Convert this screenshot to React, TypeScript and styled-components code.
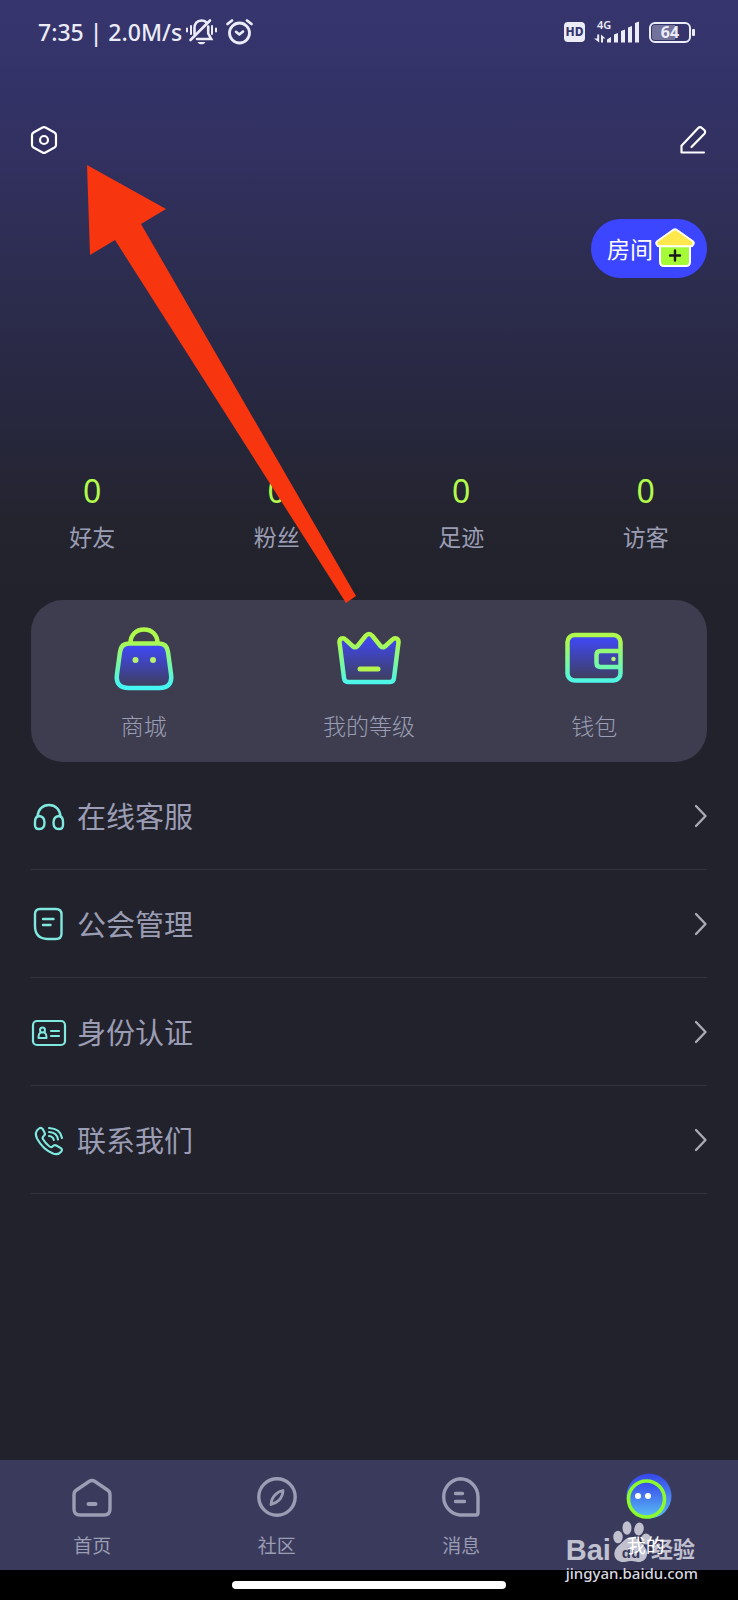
import React from 'react';
import styled, { createGlobalStyle } from 'styled-components';

const color = {
  page: '#22222c',
  card: '#3d3d4f',
  bar: '#3a3a5c',
  muted: '#9a9db3',
  lime: '#b2fa4b',
  aqua: '#7fe9e0',
  room: '#3c46ff',
  status: '#ececf8',
};

const GlobalStyle = createGlobalStyle`
  *, *::before, *::after { box-sizing: border-box; }
  body {
    margin: 0;
    background: ${color.page};
    font-family: "Noto Sans", "Noto Sans CJK SC", sans-serif;
    color: ${color.muted};
  }
  button {
    border: 0;
    padding: 0;
    background: none;
    color: inherit;
    font: inherit;
    cursor: pointer;
  }
  a { color: inherit; text-decoration: none; }
  svg { display: block; overflow: visible; flex: none; }
`;

const Page = styled.div`
  position: relative;
  display: flex;
  flex-direction: column;
  min-height: 100vh;
  background: linear-gradient(#36356d 0, #34336a 60px, #31305e 170px, #2c2c4e 290px, #27273f 410px, #24242f 520px, ${color.page} 590px);
`;

const StatusBar = styled.header`
  display: flex;
  align-items: center;
  justify-content: space-between;
  height: 64px;
  padding: 0 43px 0 38px;
  color: ${color.status};
`;

const StatusGroup = styled.div<{ $gap: number }>`
  display: flex;
  align-items: center;
  gap: ${({ $gap }) => $gap}px;
`;

const Clock = styled.span`
  font-size: 23px;
  font-weight: 500;
  line-height: 32px;
  white-space: nowrap;
`;

const HdBadge = styled.span`
  width: 21px;
  height: 20px;
  border-radius: 4px;
  background: ${color.status};
  color: #36356d;
  font-size: 12px;
  font-weight: 800;
  line-height: 20px;
  text-align: center;
`;

const Battery = styled.span`
  position: relative;
  width: 42px;
  height: 21px;
  margin-right: 4px;
  border: 2px solid ${color.status};
  border-radius: 6px;
  background: linear-gradient(90deg, #73729b 64%, transparent 64%) content-box;
  padding: 1px;
  font-size: 16px;
  font-weight: 700;
  line-height: 15px;
  text-align: center;

  &::after {
    content: '';
    position: absolute;
    top: 5px;
    right: -6px;
    width: 3px;
    height: 7px;
    border-radius: 1px;
    background: ${color.status};
  }
`;

const Toolbar = styled.nav`
  display: flex;
  justify-content: space-between;
  margin-top: 62px;
  padding: 0 31px;
  color: #fff;
`;

const RoomRow = styled.div`
  display: flex;
  justify-content: flex-end;
  margin-top: 65px;
  padding: 0 31px;
`;

const RoomButton = styled.button`
  display: flex;
  align-items: center;
  gap: 2px;
  height: 59px;
  padding: 0 12px 0 16px;
  border-radius: 30px;
  background: ${color.room};
  color: #fff;
  font-size: 23px;
  line-height: 32px;
`;

const Stats = styled.section`
  display: grid;
  grid-template-columns: repeat(4, 1fr);
  margin-top: 193px;
`;

const Stat = styled.button`
  display: flex;
  flex-direction: column;
  align-items: center;
  gap: 10px;
`;

const StatValue = styled.span`
  color: ${color.lime};
  font-size: 32px;
  line-height: 40px;
`;

const Label = styled.span<{ $light?: boolean }>`
  font-size: 23px;
  font-weight: ${({ $light }) => ($light ? 300 : 400)};
  line-height: 32px;
`;

const Card = styled.section`
  display: grid;
  grid-template-columns: repeat(3, 1fr);
  margin: 47px 31px 0;
  padding: 27px 0 20px;
  border-radius: 32px;
  background: ${color.card};
`;

const Feature = styled.button`
  display: flex;
  flex-direction: column;
  align-items: center;
  gap: 19px;
`;

const Menu = styled.nav`
  padding: 0 31px;
`;

const MenuRow = styled.a`
  display: flex;
  align-items: center;
  gap: 10px;
  height: 108px;
  border-bottom: 1px solid #33333d;
  font-size: 29px;
  line-height: 40px;
`;

const MenuText = styled.span`
  flex: 1;
  padding-top: 2px;
`;

const Footer = styled.footer`
  position: relative;
  margin-top: auto;
`;

const TabBar = styled.nav`
  display: grid;
  grid-template-columns: repeat(4, 1fr);
  height: 110px;
  background: ${color.bar};
`;

const Tab = styled.a<{ $active?: boolean }>`
  display: flex;
  flex-direction: column;
  align-items: center;
  gap: 13px;
  padding-top: 17px;
  color: ${({ $active }) => ($active ? '#fff' : color.muted)};
  font-size: 19px;
  line-height: 32px;
`;

const TabLabel = styled.span`
  position: relative;
  z-index: 1;
`;

const GestureArea = styled.div`
  display: flex;
  justify-content: center;
  height: 30px;
  padding-top: 11px;
  background: #000;
`;

const GesturePill = styled.span`
  width: 37%;
  height: 8px;
  border-radius: 4px;
  background: #fff;
`;

const Watermark = styled.div`
  position: absolute;
  right: 40px;
  bottom: 17px;
  color: #d8d8e2;
  pointer-events: none;
`;

const WatermarkBrand = styled.div`
  display: flex;
  align-items: flex-end;
  gap: 2px;
  height: 26px;
  opacity: 0.85;
  font-family: "Liberation Sans", "Noto Sans CJK SC", sans-serif;
  font-size: 29px;
  font-weight: 700;
  line-height: 26px;
`;

const WatermarkCjk = styled.span`
  font-size: 22px;
`;

const WatermarkUrl = styled.div`
  font-size: 15px;
  font-weight: 500;
  line-height: 20px;
`;

const Pointer = styled.svg`
  position: absolute;
  top: 165px;
  left: 87px;
  pointer-events: none;
`;

const MutedBell = () => (
  <svg width="36" height="26" viewBox="0 0 36 26" fill="none" stroke="currentColor" strokeWidth="2" strokeLinecap="round">
    <path d="M1 9.500v3M5 7v8M26 7v8M30 9.500v3" strokeWidth="2" />
    <path d="M8.500 15V9.500C8.500 4.500 11 1.500 15.500 1.500c2 0 3.600.6 4.800 1.700M22.200 7.500v7l3 5.500H11" strokeWidth="2.600" />
    <path d="M4.500 21 24 1.500" strokeWidth="2.600" />
    <path d="M11.500 23h8c-.8 1.500-2.200 2.300-4 2.300s-3.200-.8-4-2.300z" fill="currentColor" stroke="none" />
  </svg>
);

const Alarm = () => (
  <svg width="27" height="26" viewBox="0 0 27 26" fill="none" stroke="currentColor" strokeWidth="2.800" strokeLinecap="round" strokeLinejoin="round">
    <circle cx="13.500" cy="14" r="10" />
    <path d="M10 12.800 13.300 15.500l3.700-3" strokeWidth="2.600" />
    <path d="M1.500 5 6 1.500M25.500 5 21 1.500" strokeWidth="2.800" />
  </svg>
);

const Signal = () => (
  <svg width="46" height="22" viewBox="0 0 46 22" fill="currentColor">
    <text x="3" y="8" fontSize="11" fontWeight="600">4G</text>
    <path d="M3.200 13.500h2v8L0 17.500h3.200zM7 21.500H9V17.500H11.500L7 13.500z" />
    <path d="M13 21.500v-3l4-2.500v5.500zM20 21.500v-8l4-1.500v9.500zM27 21.500V10l4-1.500v13zM34 21.500V6.500L38 5v16.500zM41 21.500V2l4-1.500v21z" />
  </svg>
);

const SettingsIcon = () => (
  <svg width="26" height="28" viewBox="0 0 26 28" fill="none" stroke="currentColor" strokeWidth="2.200" strokeLinejoin="round">
    <path d="M11.500 1.500q1.500-.8 3 0l9 5q1.500.9 1.500 2.500v10q0 1.600-1.500 2.500l-9 5q-1.500.8-3 0l-9-5Q1 20.600 1 19V9q0-1.600 1.500-2.500z" />
    <circle cx="13" cy="14" r="4" />
  </svg>
);

const EditIcon = () => (
  <svg width="27" height="28" viewBox="0 0 27 28" fill="none" stroke="currentColor" strokeWidth="2.200" strokeLinecap="round" strokeLinejoin="round">
    <path d="M24 26.500H1.500v-6.800L18 2.200q2-2 4.200 0l1.800 1.600q2.200 2 .2 4.200L11.500 21" />
  </svg>
);

const HouseIcon = () => (
  <svg width="40" height="40" viewBox="0 0 40 40" strokeLinejoin="round" strokeLinecap="round">
    <path d="M5 16h30v17q0 4-4 4H9q-4 0-4-4z" fill="#a5fb36" stroke="#fff" strokeWidth="2" />
    <path d="M18 1q2-1.300 4 0l15.500 11q1.800 1.400 1 3.200-.7 2-2.800 2H4.300q-2.100 0-2.800-2-.8-1.800 1-3.200z" fill="#ffe84b" stroke="#fff" strokeWidth="2" />
    <path d="M20 21.500v10M15 26.500h10" stroke="#1a1a1a" strokeWidth="2.400" />
  </svg>
);

const Gradients = ({ id }: { id: string }) => (
  <defs>
    <linearGradient id={`${id}-line`} gradientUnits="userSpaceOnUse" x1="0" y1="8" x2="0" y2="58">
      <stop offset="0.100" stopColor="#aef94b" />
      <stop offset="1" stopColor="#46f6f2" />
    </linearGradient>
    <linearGradient id={`${id}-fill`} x1="0" y1="0" x2="0" y2="1">
      <stop offset="0.100" stopColor="#3f48ee" />
      <stop offset="1" stopColor="#3f3e58" />
    </linearGradient>
  </defs>
);

const BagIcon = () => (
  <svg width="64" height="64" viewBox="0 0 64 64" strokeWidth="4.500">
    <Gradients id="bag" />
    <path d="M18.500 16C18.500 8 24 2.500 32 2.500s13.500 5.500 13.500 13.500" fill="none" stroke="#aef94b" />
    <path d="M17 16.500h30q8 0 9 8.500l3 22q2 14-12 14H17Q3 61 5 47l3-22q1-8.500 9-8.500z" fill="url(#bag-fill)" stroke="url(#bag-line)" />
    <circle cx="23.500" cy="33" r="3" fill="#b8f070" />
    <circle cx="41" cy="33" r="3" fill="#b8f070" />
  </svg>
);

const CrownIcon = () => (
  <svg width="64" height="64" viewBox="0 0 64 64" strokeWidth="4.500" strokeLinecap="round" strokeLinejoin="round">
    <Gradients id="crown" />
    <path d="M2.700 17C1.500 11 6 10 9 13l6.500 6q2.500 2.300 5 0L28.500 9q3.500-4 7 0l8 10q2.500 2.300 5 0l6.500-6c3-3 7.500-2 6.300 4L57 51q-.5 4-4 4H11q-3.500 0-4-4z" fill="url(#crown-fill)" stroke="url(#crown-line)" />
    <path d="M23 42h18" stroke="#b5f44f" strokeWidth="5" />
  </svg>
);

const WalletIcon = () => (
  <svg width="64" height="64" viewBox="0 0 64 64" strokeWidth="4.500">
    <Gradients id="wallet" />
    <rect x="5.500" y="8" width="53" height="45.500" rx="7" fill="url(#wallet-fill)" stroke="url(#wallet-line)" />
    <path d="M58 24H38.500q-4 0-4 4v8q0 4 4 4H58" fill="none" stroke="url(#wallet-line)" />
    <circle cx="51.500" cy="32" r="2.300" fill="#b8f070" />
  </svg>
);

const rowIcon = {
  width: 36,
  height: 36,
  viewBox: '0 0 36 36',
  fill: 'none',
  stroke: color.aqua,
  strokeWidth: 2.4,
  strokeLinecap: 'round' as const,
  strokeLinejoin: 'round' as const,
};

const HeadsetIcon = () => (
  <svg {...rowIcon}>
    <path d="M6.500 18.500C7 11.500 11.500 7 18 7s11 4.500 11.500 11.500" />
    <path d="M4 24q0-5.500 4-6 5.500.5 5.500 6.500 0 6.500-5 6.500Q4 31.500 4 27zM32 24q0-5.500-4-6-5.500.5-5.500 6.500 0 6.500 5 6.500Q32 31.500 32 27z" />
  </svg>
);

const GuildIcon = () => (
  <svg {...rowIcon}>
    <path d="M9 3h16q5.500 0 5.500 5.500v19q0 5.500-5.500 5.500h-8.500Q4 32.500 4 20V8q0-5 5-5z" />
    <path d="M12 13h10.500M12 19h7.500" />
  </svg>
);

const IdIcon = () => (
  <svg {...rowIcon} strokeWidth={2.2}>
    <rect x="2" y="7" width="32" height="24" rx="4" />
    <circle cx="11.500" cy="16" r="2.500" strokeWidth="2" />
    <path d="M10 18.500q-2.500.5-2.500 5.500h8q0-5-2.500-5.500" strokeWidth="2" />
    <path d="M20 17h8M20 22h8" />
  </svg>
);

const PhoneIcon = () => (
  <svg {...rowIcon} strokeWidth={2.1}>
    <path d="M8 6.500q2-1.500 3.700.5l1.800 3.500q1.200 2-.8 3.500-1.800 1.400-.7 3.300 2.500 4.200 6.500 7.200 1.800 1.300 3.300-.3 1.500-1.800 3.500-.7l4.500 2.700q2 1.500.5 3.300-3.300 4-8.300 2Q12 27.500 6 16.500 3 10 8 6.500z" />
    <path d="M18 6Q29.500 6.500 31 16M18 10q8 .3 9 7.500M18 14q4 .3 4.800 4" />
  </svg>
);

const Chevron = () => (
  <svg width="14" height="24" viewBox="0 0 14 24" fill="none" stroke="#a9aab6" strokeWidth="2.400" strokeLinecap="round" strokeLinejoin="round">
    <path d="M3 2 12.500 12 3 22" />
  </svg>
);

const tabIcon = {
  width: 40,
  height: 40,
  viewBox: '0 0 40 40',
  fill: 'none',
  stroke: 'currentColor',
  strokeWidth: 3.4,
  strokeLinecap: 'round' as const,
  strokeLinejoin: 'round' as const,
};

const HomeIcon = () => (
  <svg {...tabIcon}>
    <path d="M17 4.500q3-2 6 0l12.500 8.500q2.500 1.700 2.500 4.500V32q0 6-6 6H8q-6 0-6-6V17.500q0-2.800 2.500-4.500z" />
    <path d="M16.500 27h7" strokeWidth="4" />
  </svg>
);

const CompassIcon = () => (
  <svg {...tabIcon}>
    <circle cx="20" cy="20" r="18.200" />
    <path d="M26 13.500q-.3 6-3.800 9.500-3 3-8.200 4.500.5-6 4-9.500 3-3.500 8-4.500z" strokeWidth="2.800" />
  </svg>
);

const MessageIcon = () => (
  <svg {...tabIcon}>
    <path d="M19 1.800A18.200 18.200 0 0 1 37 20v16q0 2-2 2H19A18.200 18.200 0 0 1 19 1.800z" />
    <path d="M14.500 16.500h7M14.500 24.500h9" />
  </svg>
);

const MineIcon = () => (
  <svg width="40" height="40" viewBox="0 0 40 40">
    <defs>
      <linearGradient id="mine-fill" x1="0" y1="0" x2="0" y2="1">
        <stop offset="0" stopColor="#3646ea" />
        <stop offset="1" stopColor="#58bdf5" />
      </linearGradient>
    </defs>
    <circle cx="23" cy="19" r="22.500" fill="url(#mine-fill)" />
    <circle cx="20.500" cy="22" r="18" fill="url(#mine-fill)" stroke="#8cfb2d" strokeWidth="3.600" />
    <circle cx="12" cy="19" r="3" fill="#fff" />
    <circle cx="22" cy="19" r="3" fill="#fff" />
  </svg>
);

const Paw = () => (
  <svg width="36" height="44" viewBox="0 0 36 44" fill="currentColor">
    <ellipse cx="5" cy="18" rx="4.700" ry="6.300" />
    <ellipse cx="14" cy="9" rx="4.500" ry="6.800" />
    <ellipse cx="26" cy="10" rx="4.700" ry="6.500" transform="rotate(12 26 10)" />
    <ellipse cx="33" cy="20" rx="4.700" ry="5.500" />
    <path d="M19 18c5 0 7 4 11 8 8 8 3 17-4 17-4 0-5-1-8-1s-4 1-8 1c-8 0-12-9-5-16 5-4 8-9 14-9z" />
    <text x="18" y="39" fontSize="15" fontWeight="600" textAnchor="middle" fill={color.bar}>du</text>
  </svg>
);

const stats = ['好友', '粉丝', '足迹', '访客'];

const features = [
  { label: '商城', Icon: BagIcon },
  { label: '我的等级', Icon: CrownIcon },
  { label: '钱包', Icon: WalletIcon },
];

const menu = [
  { label: '在线客服', Icon: HeadsetIcon },
  { label: '公会管理', Icon: GuildIcon },
  { label: '身份认证', Icon: IdIcon },
  { label: '联系我们', Icon: PhoneIcon },
];

const tabs = [
  { label: '首页', Icon: HomeIcon },
  { label: '社区', Icon: CompassIcon },
  { label: '消息', Icon: MessageIcon },
  { label: '我的', Icon: MineIcon, active: true },
];

export default function App() {
  return (
    <Page>
      <GlobalStyle />
      <StatusBar>
        <StatusGroup $gap={4}>
          <Clock>7:35 | 2.0M/s</Clock>
          <MutedBell />
          <Alarm />
        </StatusGroup>
        <StatusGroup $gap={9}>
          <HdBadge>HD</HdBadge>
          <Signal />
          <Battery>64</Battery>
        </StatusGroup>
      </StatusBar>

      <Toolbar>
        <button aria-label="设置"><SettingsIcon /></button>
        <button aria-label="编辑"><EditIcon /></button>
      </Toolbar>

      <RoomRow>
        <RoomButton>房间<HouseIcon /></RoomButton>
      </RoomRow>

      <Stats>
        {stats.map((label) => (
          <Stat key={label}>
            <StatValue>0</StatValue>
            <Label>{label}</Label>
          </Stat>
        ))}
      </Stats>

      <Card>
        {features.map(({ label, Icon }) => (
          <Feature key={label}>
            <Icon />
            <Label $light>{label}</Label>
          </Feature>
        ))}
      </Card>

      <Menu>
        {menu.map(({ label, Icon }) => (
          <MenuRow key={label} href="#">
            <Icon />
            <MenuText>{label}</MenuText>
            <Chevron />
          </MenuRow>
        ))}
      </Menu>

      <Footer>
        <TabBar>
          {tabs.map(({ label, Icon, active }) => (
            <Tab key={label} href="#" $active={active}>
              <Icon />
              <TabLabel>{label}</TabLabel>
            </Tab>
          ))}
        </TabBar>
        <GestureArea>
          <GesturePill />
        </GestureArea>
        <Watermark>
          <WatermarkBrand>
            <span>Bai</span>
            <Paw />
            <WatermarkCjk>经验</WatermarkCjk>
          </WatermarkBrand>
          <WatermarkUrl>jingyan.baidu.com</WatermarkUrl>
        </Watermark>
      </Footer>

      <Pointer width="269" height="438" viewBox="0 0 269 438" aria-hidden="true">
        <path d="M0 0 79 44 54 59 269 431 259 438 28 75 3 90z" fill="#f73610" />
      </Pointer>
    </Page>
  );
}
